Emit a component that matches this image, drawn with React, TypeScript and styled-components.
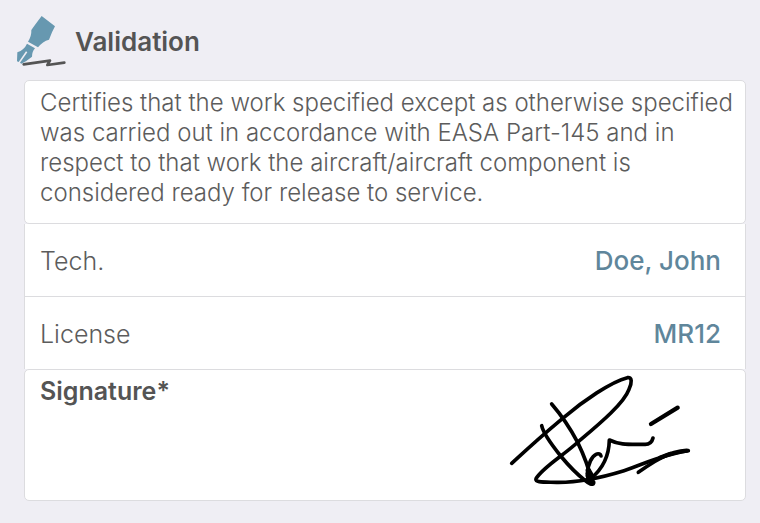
import React from "react";
import styled, { createGlobalStyle } from "styled-components";

const colors = {
  page: "#efeef4",
  border: "#dcdcdf",
  text: "#5c5c5c",
  heading: "#545454",
  accent: "#5f869b",
  pen: "#6798b0",
};

const GlobalStyle = createGlobalStyle`
  * { box-sizing: border-box; }
  body {
    margin: 0;
    background: ${colors.page};
    color: ${colors.text};
    font-family: Inter, "Liberation Sans", sans-serif;
    font-size: 25px;
    line-height: 30px;
  }
`;

const Page = styled.main`
  padding: 14px 14px 22px 24px;
`;

const Header = styled.header`
  display: flex;
  align-items: center;
  gap: 8px;
  height: 54px;
  margin: 0 0 12px -9px;
`;

const Title = styled.h1`
  margin: 0;
  padding-top: 2px;
  color: ${colors.heading};
  font-size: 26px;
  font-weight: 600;
`;

const Panel = styled.section`
  background: #fff;
  border: 1px solid ${colors.border};
  border-radius: 5px;
`;

const Statement = styled(Panel)`
  padding: 7px 8px 15px 15px;
`;

const StatementText = styled.p`
  margin: 0;
  font-size: 24px;
  font-weight: 300;
`;

const Details = styled.dl`
  margin: 0;
  background: #fff;
  border: solid ${colors.border};
  border-width: 0 1px;
`;

const Row = styled.div`
  display: flex;
  align-items: center;
  justify-content: space-between;
  box-sizing: content-box;
  height: 72px;
  padding: 0 24px 0 15px;

  & + & {
    border-top: 1px solid ${colors.border};
  }
`;

const Label = styled.dt`
  padding-top: 2px;
  font-weight: 300;
`;

const Value = styled.dd`
  margin: 0;
  padding-top: 2px;
  color: ${colors.accent};
  font-size: 26px;
  font-weight: 500;
`;

const SignaturePanel = styled(Panel)`
  display: flex;
  justify-content: space-between;
  padding: 2px 53px 10px 15px;
`;

const SignatureLabel = styled.h2`
  margin: 0;
  padding-top: 4px;
  color: ${colors.heading};
  font-size: 25px;
  font-weight: 600;
`;

const PenIcon = () => (
  <svg width="52" height="54" viewBox="45 42 156 162" aria-hidden="true">
    <g fill={colors.pen}>
      <path d="M125 48 L165 79 Q156 95 147 119 Q128 124 114 142 L84 125 Q95 108 94 90 Q106 73 125 48Z" />
      <path d="M81 131 L105 145 Q96 155 96 170 Q82 182 64 191 L60 188 L82 157 L78 154 L56 186 L51 184 L52 157 Q73 149 81 131Z" />
    </g>
    <path
      d="M71 193 L150 182 L142 195 L193 188"
      fill="none"
      stroke={colors.heading}
      strokeWidth="8"
      strokeLinecap="round"
      strokeLinejoin="round"
    />
  </svg>
);

const SignatureDrawing = () => (
  <svg width="184" height="118" viewBox="24 21 552 354" role="img" aria-label="Signature of John Doe">
    <g fill="none" stroke="#000" strokeWidth="11" strokeLinecap="round" strokeLinejoin="round">
      <path d="M35 295 C75 258 123 214 188 160 C250 107 334 50 382 38 C397 35 396 54 387 73 C371 117 293 181 234 231 C188 273 128 307 108 341 C103 353 132 351 170 352 C238 353 304 338 372 317 C433 297 492 267 565 257" />
      <path d="M155 117 C193 161 214 196 233 232 C251 269 265 302 275 348" />
      <path d="M125 182 C131 209 157 242 182 273 C206 302 230 327 256 347 C266 356 279 362 281 354 C284 343 258 351 262 325 C264 295 276 274 288 268 C296 264 302 268 303 273" />
      <path d="M272 341 C304 315 327 278 328 225 C358 240 384 238 433 238 C449 239 456 231 459 219" />
      <path d="M265 316 L276 335" strokeWidth="16" />
      <path d="M453 177 L533 128" strokeWidth="13" />
      <path d="M415 322 C442 303 472 282 510 266" />
      <path d="M480 278 C505 268 537 259 560 257" strokeWidth="13" />
    </g>
  </svg>
);

const details = [
  { label: "Tech.", value: "Doe, John" },
  { label: "License", value: "MR12" },
];

export default function App() {
  return (
    <>
      <GlobalStyle />
      <Page>
        <Header>
          <PenIcon />
          <Title>Validation</Title>
        </Header>
        <Statement>
          <StatementText>
            Certifies that the work specified except as otherwise specified was carried out in
            accordance with EASA Part-145 and in respect to that work the aircraft/aircraft
            component is considered ready for release to service.
          </StatementText>
        </Statement>
        <Details>
          {details.map(({ label, value }) => (
            <Row key={label}>
              <Label>{label}</Label>
              <Value>{value}</Value>
            </Row>
          ))}
        </Details>
        <SignaturePanel>
          <SignatureLabel>Signature*</SignatureLabel>
          <SignatureDrawing />
        </SignaturePanel>
      </Page>
    </>
  );
}
